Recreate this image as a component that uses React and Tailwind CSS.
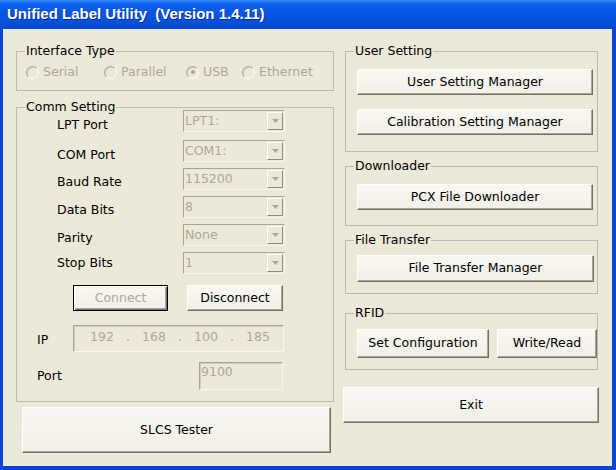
import React from "react";

const Btn = ({ className = "", children, disabled, def }) => {
  return (
    <button
      className={`flex items-center justify-center bg-[linear-gradient(to_bottom,#F8F7F2,#F1EFE6)] ${
        def
          ? "border border-black shadow-[inset_1px_1px_0_#fff,inset_-1px_-1px_0_#716F64,inset_-2px_-2px_0_#ACA899]"
          : "border border-t-white border-l-white border-r-[#716F64] border-b-[#716F64] shadow-[inset_-1px_-1px_0_#ACA899]"
      } ${disabled ? "text-[#ACA899]" : "text-black"} ${className}`}
    >
      {children}
    </button>
  );
};

const GroupBox = ({ label, className = "", children }) => {
  return (
    <div className={`relative border border-[#BDBBAC] ${className}`}>
      <span className="absolute left-[8px] top-[-8px] bg-[#ECE9D8] px-[1px] leading-[14px]">
        {label}
      </span>
      {children}
    </div>
  );
};

const Radio = ({ label, checked, className = "" }) => {
  return (
    <div className={`flex items-center ${className}`}>
      <span className="mr-[4px] flex h-[13px] w-[13px] items-center justify-center rounded-full border border-t-[#ACA899] border-l-[#ACA899] border-r-white border-b-white shadow-[inset_1px_1px_0_#D4D0C8]">
        {checked && <span className="h-[4px] w-[4px] rounded-full bg-[#ACA899]"></span>}
      </span>
      <span className="leading-[14px] text-[#ACA899]">{label}</span>
    </div>
  );
};

const Combo = ({ value }) => {
  return (
    <div className="flex h-[22px] w-[102px] border border-t-[#A7A596] border-l-[#A7A596] border-r-[#F7F6F0] border-b-[#F7F6F0]">
      <span className="flex-1 pl-[1px] leading-[19px] text-[#ACA899]">{value}</span>
      <span className="my-[1px] mr-[1px] flex w-[16px] items-center justify-center border border-t-white border-l-white border-r-[#8E8C7F] border-b-[#8E8C7F]">
        <svg width="7" height="4" viewBox="0 0 7 4">
          <path d="M0 0h7L3.5 4z" fill="#ACA899" />
        </svg>
      </span>
    </div>
  );
};

const rows = [
  ["LPT Port", "LPT1:", "mt-[2px]", "pt-[8px]"],
  ["COM Port", "COM1:", "mt-[8px]", "pt-[8px]"],
  ["Baud Rate", "115200", "mt-[6px]", "pt-[7px]"],
  ["Data Bits", "8", "mt-[6px]", "pt-[7px]"],
  ["Parity", "None", "mt-[6px]", "pt-[7px]"],
  ["Stop Bits", "1", "mt-[6px]", "pt-[4px]"],
];

const App = () => {
  return (
    <div className="flex h-[470px] w-[616px] flex-col font-['DejaVu_Sans',sans-serif] text-[12.5px] text-black">
      <div className="flex h-[29px] items-center bg-[linear-gradient(to_bottom,#3A8CF6_0%,#0D62EC_12%,#0757E5_40%,#0551DC_75%,#0548CF_100%)] pl-[7px]">
        <span className="font-['Liberation_Sans',Arial,sans-serif] text-[15px] font-bold text-white [text-shadow:1px_1px_0_#0A2C8C]">
          Unified Label Utility&nbsp; (Version 1.4.11)
        </span>
      </div>
      <div className="flex flex-1 border-b-[4px] border-l-[3px] border-r-[4px] border-[#0A45D6] bg-[#ECE9D8]">
        <div className="ml-[13px] flex w-[318px] flex-col">
          <GroupBox label="Interface Type" className="mt-[22px] flex h-[40px] items-center pl-[9px] pt-[2px]">
            <Radio label="Serial" className="w-[78px]" />
            <Radio label="Parallel" className="w-[82px]" />
            <Radio label="USB" checked className="w-[56px]" />
            <Radio label="Ethernet" />
          </GroupBox>

          <GroupBox label="Comm Setting" className="mt-[16px] flex h-[295px] flex-col">
            <div className="flex flex-col pl-[40px]">
              {rows.map(([name, value, mt, pt]) => (
                <div key={name} className={`flex h-[22px] items-start ${mt}`}>
                  <span className={`w-[126px] leading-[14px] ${pt}`}>{name}</span>
                  <Combo value={value} />
                </div>
              ))}
            </div>
            <div className="mt-[11px] flex gap-[19px] pl-[56px]">
              <Btn def disabled className="h-[26px] w-[95px]">
                Connect
              </Btn>
              <Btn className="h-[26px] w-[96px]">Disconnect</Btn>
            </div>
            <div className="mt-[14px] flex items-center pl-[20px]">
              <span className="mt-[3px] w-[36px]">IP</span>
              <div className="flex h-[27px] w-[211px] items-center border border-t-[#A7A596] border-l-[#A7A596] border-r-[#F7F6F0] border-b-[#F7F6F0] pb-[2px] text-[#ACA899] shadow-[inset_1px_1px_0_#CFCCBD]">
                <span className="ml-[5px] w-[46px] text-center">192</span>
                <span className="w-[6px] text-center">.</span>
                <span className="w-[46px] text-center">168</span>
                <span className="w-[6px] text-center">.</span>
                <span className="w-[46px] text-center">100</span>
                <span className="w-[6px] text-center">.</span>
                <span className="w-[46px] text-center">185</span>
              </div>
            </div>
            <div className="mt-[10px] flex items-center pl-[20px]">
              <span className="w-[162px]">Port</span>
              <div className="h-[28px] w-[84px] border border-t-[#A7A596] border-l-[#A7A596] border-r-[#F7F6F0] border-b-[#F7F6F0] pl-[1px] pt-[1px] leading-[16px] text-[#ACA899] shadow-[inset_1px_1px_0_#CFCCBD]">
                9100
              </div>
            </div>
          </GroupBox>

          <Btn className="ml-[6px] mt-[5px] h-[46px] w-[309px]">SLCS Tester</Btn>
        </div>

        <div className="ml-[9px] flex w-[256px] flex-col">
          <GroupBox label="User Setting" className="ml-[2px] mt-[22px] flex h-[101px] w-[253px] flex-col pl-[11px] pt-[17px]">
            <Btn className="h-[26px] w-[236px]">User Setting Manager</Btn>
            <Btn className="mt-[14px] h-[26px] w-[236px]">Calibration Setting Manager</Btn>
          </GroupBox>
          <GroupBox label="Downloader" className="ml-[2px] mt-[14px] flex h-[60px] w-[253px] flex-col pl-[11px] pt-[17px]">
            <Btn className="h-[26px] w-[236px]">PCX File Downloader</Btn>
          </GroupBox>
          <GroupBox label="File Transfer" className="ml-[2px] mt-[14px] flex h-[54px] w-[253px] flex-col pl-[11px] pt-[14px]">
            <Btn className="h-[27px] w-[237px]">File Transfer Manager</Btn>
          </GroupBox>
          <GroupBox label="RFID" className="ml-[2px] mt-[19px] flex h-[57px] w-[253px] gap-[8px] pl-[11px] pt-[15px]">
            <Btn className="h-[29px] w-[132px]">Set Configuration</Btn>
            <Btn className="h-[29px] w-[100px]">Write/Read</Btn>
          </GroupBox>
          <Btn className="mt-[17px] h-[36px] w-[256px]">Exit</Btn>
        </div>
      </div>
    </div>
  );
};

export default App;
